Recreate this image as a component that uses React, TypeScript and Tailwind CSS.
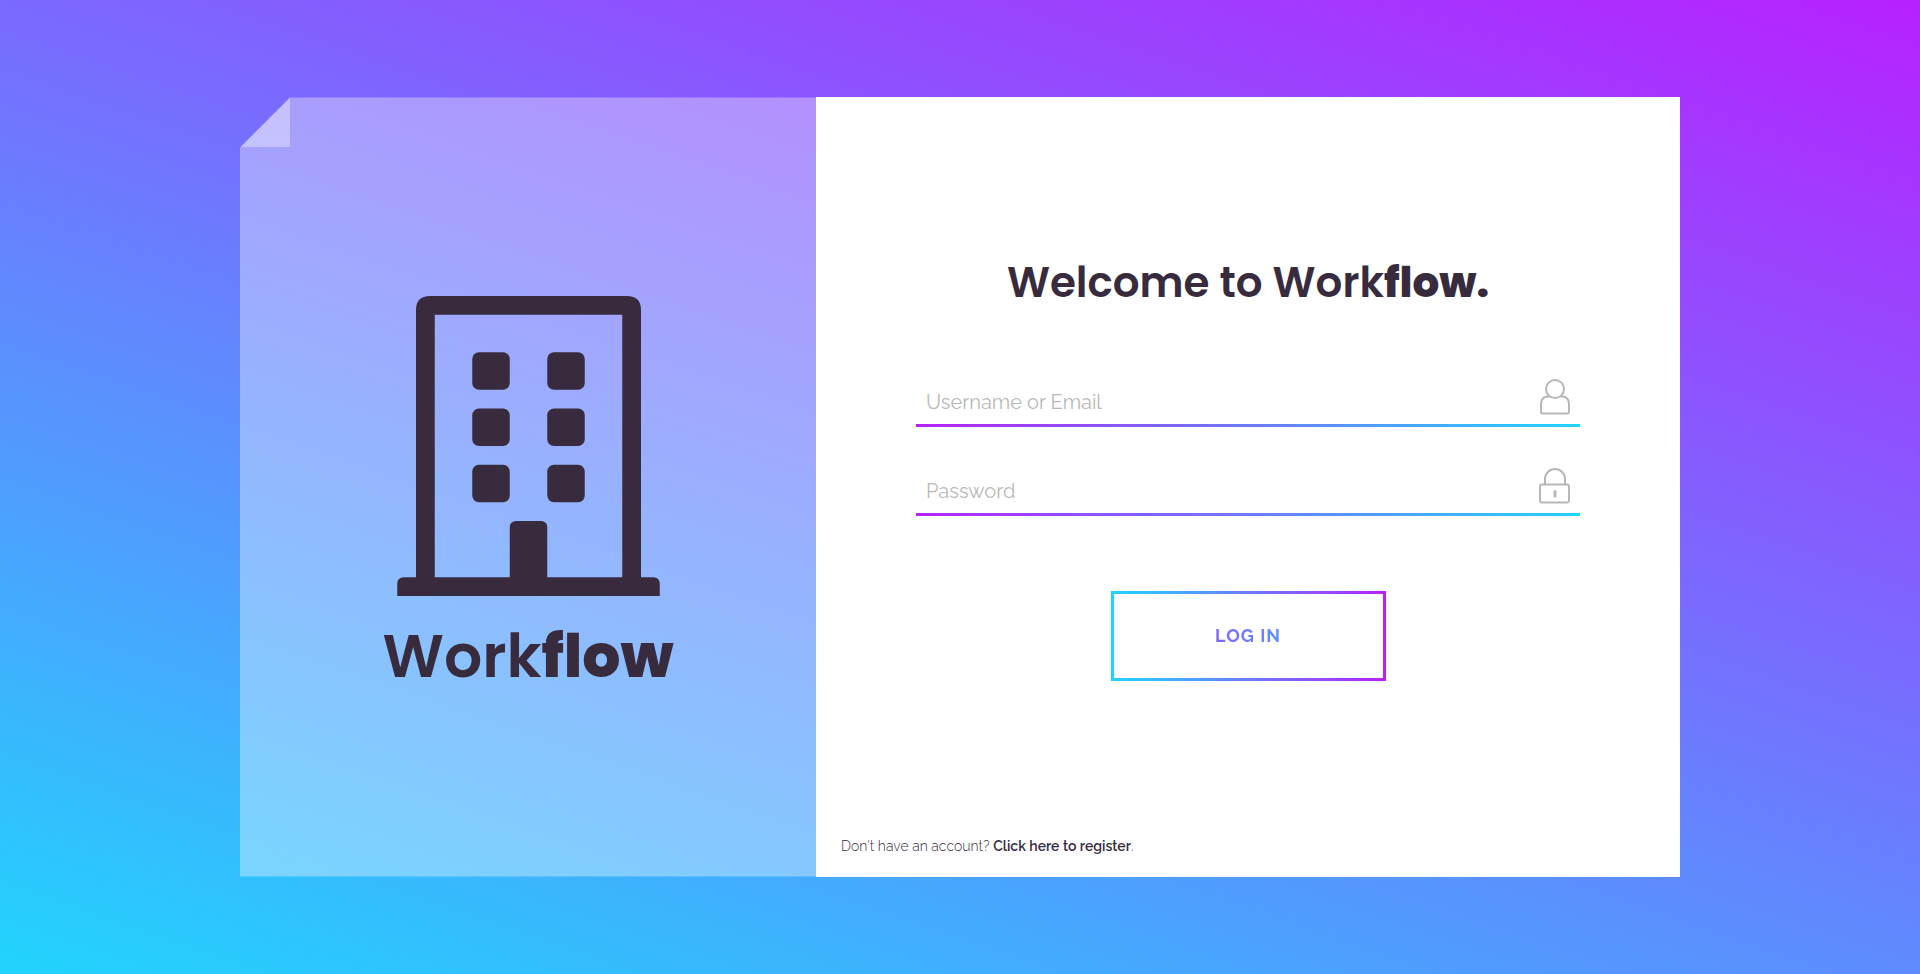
import type { ReactNode } from "react";

function BuildingIcon() {
  return (
    <svg viewBox="0 0 14 16" className="h-[300px] w-[263px] fill-[#382b3d]" aria-hidden="true">
      <path
        fillRule="evenodd"
        d="M1 15V.75Q1 0 1.75 0H12.25Q13 0 13 .75V15H13.65Q14 15 14 15.35V16H0V15.35Q0 15 .35 15ZM2 1V15H6V12.35Q6 12 6.35 12H7.65Q8 12 8 12.35V15H12V1Z"
      />
      {[3, 6, 9].map((y) => (
        <g key={y}>
          <rect x="4" y={y} width="2" height="2" rx=".36" />
          <rect x="8" y={y} width="2" height="2" rx=".36" />
        </g>
      ))}
    </svg>
  );
}

function UserIcon() {
  return (
    <svg viewBox="0 0 32 36" className="h-9 w-8 fill-none stroke-[#b7b7b7] stroke-2" aria-hidden="true">
      <circle cx="16" cy="10" r="9" />
      <path d="M10.5 17.5H9Q2 17.5 2 25V32.5Q2 34.5 4 34.5H28Q30 34.5 30 32.5V25Q30 17.5 23 17.5H21.5" />
    </svg>
  );
}

function LockIcon() {
  return (
    <svg viewBox="0 0 32 36" className="h-9 w-8 fill-none stroke-[#b7b7b7] stroke-2" aria-hidden="true">
      <path d="M6 16.5V11A10 10 0 0 1 26 11V16.5" />
      <rect x="1" y="16.5" width="29" height="18" rx="2" />
      <path d="M16 23.5V28" strokeWidth="3" strokeLinecap="round" />
    </svg>
  );
}

type FieldProps = { id: string; type: string; label: string; icon: ReactNode };

function Field({ id, type, label, icon }: FieldProps) {
  return (
    <label
      htmlFor={id}
      className="flex items-end border-b-3 [border-image:linear-gradient(to_right,#b721ff,#21d4fd)_1]"
    >
      <input
        id={id}
        type={type}
        placeholder={label}
        aria-label={label}
        className="h-12 min-w-0 flex-1 bg-transparent px-2.5 pt-1 text-xl text-[#382b3d] outline-none placeholder:text-[#b7b7b7]"
      />
      <span className="pr-[9px] pb-[9px]">{icon}</span>
    </label>
  );
}

export default function App() {
  return (
    <main className="flex min-h-screen items-center justify-center bg-[linear-gradient(19deg,#21d4fd_0%,#b721ff_100%)] font-[Raleway,Lato,sans-serif] text-[#382b3d]">
      <div className="flex min-h-[80vh] w-3/4">
        <section className="relative flex w-2/5 flex-col items-center justify-center bg-white/35 pt-[18px] [clip-path:polygon(50px_0,100%_0,100%_100%,0_100%,0_50px)]">
          <div className="absolute top-0 left-0 size-[50px] bg-white/35" />
          <BuildingIcon />
          <p className="mt-5 font-[Poppins,Inter,sans-serif] text-[60px] leading-20 font-semibold">
            Work<span className="font-extrabold">flow</span>
          </p>
        </section>
        <section className="flex w-3/5 flex-col bg-white">
          <div className="flex flex-1 flex-col items-center px-25 pt-[156px]">
            <h1 className="font-[Poppins,Inter,sans-serif] text-[42px] leading-15 font-semibold">
              Welcome to Work<span className="font-extrabold">flow.</span>
            </h1>
            <form className="mt-[63px] flex w-full flex-col gap-[38px]" onSubmit={(e) => e.preventDefault()}>
              <Field id="username" type="text" label="Username or Email" icon={<UserIcon />} />
              <Field id="password" type="password" label="Password" icon={<LockIcon />} />
              <button
                type="submit"
                className="mt-[37px] h-[90px] w-[275px] cursor-pointer self-center border-3 [border-image:linear-gradient(to_right,#21d4fd,#b721ff)_1]"
              >
                <span className="block bg-[linear-gradient(to_right,#b721ff,#21d4fd)] bg-clip-text text-lg font-bold tracking-[1px] text-transparent">
                  LOG IN
                </span>
              </button>
            </form>
          </div>
          <p className="px-[25px] pb-[21px] text-sm leading-5 font-light">
            Don't have an account?{" "}
            <a href="#register" className="font-semibold">
              Click here to register
            </a>
            .
          </p>
        </section>
      </div>
    </main>
  );
}
